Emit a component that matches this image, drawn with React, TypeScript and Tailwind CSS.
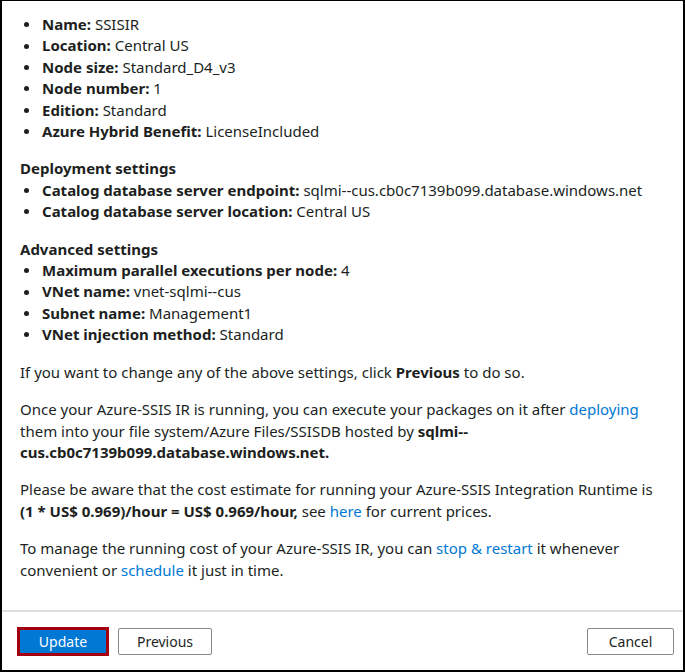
const link = "text-[#0078d4]";

function Item({ label, value }: { label: string; value: string }) {
  return (
    <li className="flex items-start">
      <span className="w-[22px] shrink-0 h-[21.4px] flex items-center pl-[4px]">
        <span className="w-[5px] h-[5px] rounded-full bg-[#201f1e]" />
      </span>
      <span>
        <b className="font-bold">{label}:</b> {value}
      </span>
    </li>
  );
}

export default function App() {
  return (
    <div
      className="w-[685px] h-[672px] border-2 border-t border-black bg-white text-[#201f1e] flex flex-col"
      style={{ fontFamily: '"Noto Sans", "Open Sans", sans-serif' }}
    >
      <div className="flex-1 pl-[18px] pr-[14px] pt-[13px] text-[15px] leading-[21.4px]">
        <ul>
          <Item label="Name" value="SSISIR" />
          <Item label="Location" value="Central US" />
          <Item label="Node size" value="Standard_D4_v3" />
          <Item label="Node number" value="1" />
          <Item label="Edition" value="Standard" />
          <Item label="Azure Hybrid Benefit" value="LicenseIncluded" />
        </ul>

        <div className="mt-[16px] font-bold">Deployment settings</div>
        <ul>
          <Item label="Catalog database server endpoint" value="sqlmi--cus.cb0c7139b099.database.windows.net" />
          <Item label="Catalog database server location" value="Central US" />
        </ul>

        <div className="mt-[16px] font-bold">Advanced settings</div>
        <ul>
          <Item label="Maximum parallel executions per node" value="4" />
          <Item label="VNet name" value="vnet-sqlmi--cus" />
          <Item label="Subnet name" value="Management1" />
          <Item label="VNet injection method" value="Standard" />
        </ul>

        <p className="mt-[16px]">
          If you want to change any of the above settings, click <b className="font-bold">Previous</b> to do so.
        </p>

        <p className="mt-[16px]">
          Once your Azure-SSIS IR is running, you can execute your packages on it after{" "}
          <span className={link}>deploying</span> them into your file system/Azure Files/SSISDB hosted by{" "}
          <b className="font-bold">sqlmi--cus.cb0c7139b099.database.windows.net.</b>
        </p>

        <p className="mt-[16px]">
          Please be aware that the cost estimate for running your Azure-SSIS Integration Runtime is{" "}
          <b className="font-bold">(1 * US$ 0.969)/hour = US$ 0.969/hour,</b> see{" "}
          <span className={link}>here</span> for current prices.
        </p>

        <p className="mt-[16px]">
          To manage the running cost of your Azure-SSIS IR, you can <span className={link}>stop &amp; restart</span> it
          whenever convenient or <span className={link}>schedule</span> it just in time.
        </p>
      </div>

      <div className="h-[60px] border-t-2 border-[#e1dfdd] flex items-center pl-[15px] pr-[9px] text-[14px]">
        <div className="border-[3px] border-[#a4000f]">
          <button className="w-[86px] h-[23px] bg-[#0078d4] text-white flex items-center justify-center">Update</button>
        </div>
        <button className="ml-[9px] w-[94px] h-[27px] border border-[#8a8886] rounded-[2px] text-[#201f1e]">
          Previous
        </button>
        <button className="ml-auto w-[87px] h-[27px] border border-[#8a8886] rounded-[2px] text-[#201f1e]">
          Cancel
        </button>
      </div>
    </div>
  );
}
